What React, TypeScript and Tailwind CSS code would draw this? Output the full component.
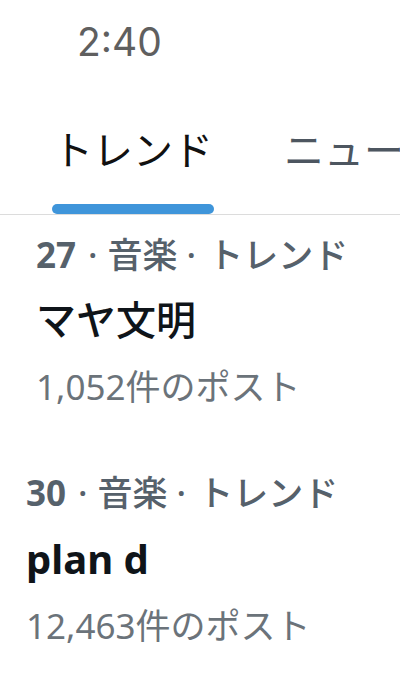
import React from "react";

const jp = { fontFamily: '"Noto Sans", "Noto Sans CJK JP", sans-serif' };

function Trend({
  rank,
  title,
  count,
  pl,
  titleLatin,
  titleMt,
  countMt,
}: {
  rank: string;
  title: string;
  count: string;
  pl: string;
  titleLatin?: boolean;
  titleMt: string;
  countMt: string;
}) {
  return (
    <div className={`flex flex-col ${pl}`}>
      <div className="flex items-center text-[35px] leading-[40px] text-[#56616b] whitespace-nowrap font-medium" style={jp}>
        <span className="font-bold">{rank}</span>
        <span className="ml-[12px] mr-[10px]">·</span>
        <span>音楽</span>
        <span className="ml-[9px] mr-[12px]">·</span>
        <span>トレンド</span>
      </div>
      <div
        className={`${titleMt} text-[40px] leading-[48px] text-[#0f1419] whitespace-nowrap ${titleLatin ? "font-bold" : "font-medium"}`}
        style={jp}
      >
        {title}
      </div>
      <div className={`${countMt} text-[35px] leading-[40px] text-[#6b737a] whitespace-nowrap`} style={jp}>
        {count}
      </div>
    </div>
  );
}

export default function App() {
  return (
    <div className="w-[400px] h-[699px] bg-white overflow-hidden flex flex-col">
      <div className="pt-[22px] pl-[77px] text-[39px] leading-[40px] text-[#5f5f5f]" style={{ fontFamily: "Inter, sans-serif" }}>
        2:40
      </div>
      <div className="mt-[64px] flex border-b border-[#dcdcdc] whitespace-nowrap">
        <div className="ml-[52px] w-[162px] shrink-0 flex flex-col items-center">
          <div className="text-[40px] leading-[48px] text-[#111]" style={jp}>
            トレンド
          </div>
          <div className="mt-[30px] h-[10px] w-full rounded-full bg-[#3f95da]" />
        </div>
        <div className="ml-[70px] shrink-0 text-[40px] leading-[48px] text-[#4d5660]" style={jp}>
          ニュース
        </div>
      </div>
      <div className="mt-[20px]">
        <Trend rank="27" title="マヤ文明" count="1,052件のポスト" pl="pl-[36px]" titleMt="mt-[21px]" countMt="mt-[23px]" />
      </div>
      <div className="mt-[66px]">
        <Trend rank="30" title="plan d" count="12,463件のポスト" pl="pl-[26px]" titleLatin titleMt="mt-[22px]" countMt="mt-[23px]" />
      </div>
    </div>
  );
}
